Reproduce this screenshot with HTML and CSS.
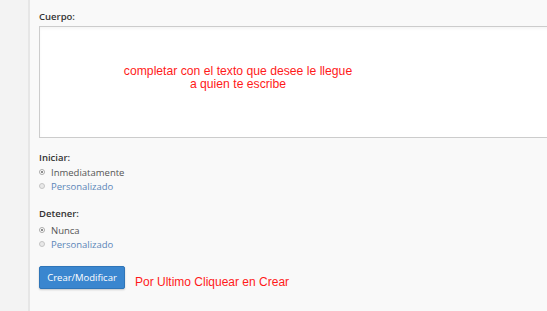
FILE: index.html
```html
<!DOCTYPE html>
<html>
<head>
<meta charset="utf-8">
<link rel="stylesheet" href="styles.css">
</head>
<body>
<div class="page">
  <div class="sidebar"></div>
  <div class="content">
    <div class="field">
      <div class="label">Cuerpo:</div>
      <div class="textarea-wrap">
        <div class="textarea"></div>
        <div class="note">completar con el texto que desee le llegue<br>a quien te escribe</div>
      </div>
    </div>
    <div class="field group start">
      <div class="label">Iniciar:</div>
      <div class="radio checked"><span class="dot"></span><span class="rtext">Inmediatamente</span></div>
      <div class="radio"><span class="dot"></span><span class="rtext link">Personalizado</span></div>
    </div>
    <div class="field group stop">
      <div class="label">Detener:</div>
      <div class="radio checked"><span class="dot"></span><span class="rtext">Nunca</span></div>
      <div class="radio"><span class="dot"></span><span class="rtext link">Personalizado</span></div>
    </div>
    <div class="actions">
      <button class="btn">Crear/Modificar</button>
      <span class="hint">Por Ultimo Cliquear en Crear</span>
    </div>
  </div>
</div>
</body>
</html>
```
FILE: styles.css
```css
html, body {
  margin: 0;
  padding: 0;
  height: 100%;
  overflow: hidden;
}
body {
  font-family: "Open Sans", sans-serif;
  background: #f9f9f9;
}
.page {
  display: flex;
  height: 311px;
}
.sidebar {
  width: 28px;
  flex: none;
  background: #f3f3f3;
  border-right: 2px solid #e6e6e6;
}
.content {
  flex: 1;
  padding: 10px 0 0 9px;
  display: flex;
  flex-direction: column;
}
.label {
  font-size: 9.5px;
  font-weight: 600;
  color: #333;
  line-height: 13px;
}
.textarea-wrap {
  position: relative;
  margin-top: 3px;
  margin-right: -20px;
}
.textarea {
  height: 110px;
  background: #fff;
  border: 1px solid #cccccc;
  box-shadow: inset 0 2px 3px rgba(0,0,0,0.04);
}
.note {
  position: absolute;
  left: 83px;
  top: 39px;
  width: 232px;
  text-align: center;
  font-family: "Liberation Sans", Arial, sans-serif;
  font-size: 12.2px;
  line-height: 13px;
  color: #ff1a1a;
}
.group {
  margin-top: 13px;
}
.start .label {
  margin-bottom: 1px;
}
.stop {
  margin-top: 14px;
}
.stop .label {
  margin-bottom: 3px;
}
.radio {
  display: flex;
  align-items: center;
  height: 14px;
  font-size: 9.5px;
}
.dot {
  width: 6px;
  height: 6px;
  border-radius: 50%;
  border: 1px solid #c4c4c4;
  background: #e8e8e8;
  margin-right: 6px;
  box-sizing: border-box;
  position: relative;
}
.radio.checked .dot {
  background: #fff;
  border-color: #aaa;
}
.radio.checked .dot::after {
  content: "";
  position: absolute;
  left: 1px;
  top: 1px;
  width: 2px;
  height: 2px;
  border-radius: 50%;
  background: #666;
}
.rtext {
  color: #555;
}
.rtext.link {
  color: #5b86b8;
}
.actions {
  display: flex;
  align-items: center;
  margin-top: 15px;
}
.btn {
  width: 86px;
  height: 23px;
  background: #3a86cf;
  border: 1px solid #2f75b8;
  border-radius: 2px;
  color: #fff;
  font-family: "Open Sans", sans-serif;
  font-size: 9.5px;
  padding: 0;
  box-shadow: 0 1px 2px rgba(0,0,0,0.2);
}
.hint {
  margin-left: 10px;
  margin-top: 8px;
  font-family: "Liberation Sans", Arial, sans-serif;
  font-size: 12px;
  color: #ff1a1a;
}
```
